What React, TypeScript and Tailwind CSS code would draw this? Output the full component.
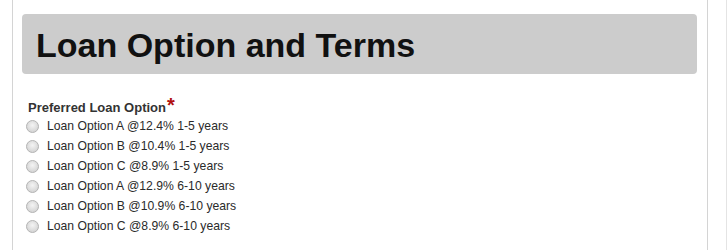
import React from "react";

const options = [
  "Loan Option A @12.4% 1-5 years",
  "Loan Option B @10.4% 1-5 years",
  "Loan Option C @8.9% 1-5 years",
  "Loan Option A @12.9% 6-10 years",
  "Loan Option B @10.9% 6-10 years",
  "Loan Option C @8.9% 6-10 years",
];

function Radio() {
  return (
    <svg width="13" height="13" viewBox="0 0 13 13" className="shrink-0">
      <defs>
        <radialGradient id="rg" cx="50%" cy="40%" r="60%">
          <stop offset="0%" stopColor="#f4f4f4" />
          <stop offset="100%" stopColor="#d2d2d2" />
        </radialGradient>
      </defs>
      <circle cx="6.5" cy="6.5" r="6" fill="url(#rg)" stroke="#b4b4b4" strokeWidth="1" />
    </svg>
  );
}

export default function App() {
  return (
    <div className="w-[728px] h-[250px] bg-white flex overflow-hidden" style={{ fontFamily: '"Liberation Sans", Arial, sans-serif' }}>
      <div className="w-[12px] shrink-0" />
      <div className="w-[696px] shrink-0 border-l border-r border-[#d4d4d4] h-full">
        <div className="mt-[14px] ml-[9px] mr-[10px] h-[60px] bg-[#cccccc] rounded-[4px] flex items-center pl-[14px]">
          <h1 className="text-[34px] font-bold text-[#111111] leading-none pt-[2px]">Loan Option and Terms</h1>
        </div>
        <div className="pl-[15px] pt-[21px]">
          <div className="flex items-start h-[21px]">
            <span className="text-[13px] font-bold text-[#333333] leading-none mt-[6px]">Preferred Loan Option</span>
            <span className="text-[20px] font-bold text-[#b01010] leading-none mt-[0px] ml-[1px]">*</span>
          </div>
          <div className="flex flex-col">
            {options.map((o) => (
              <label key={o} className="flex items-center h-[20px]">
                <span className="ml-[-2px] flex">
                  <Radio />
                </span>
                <span className="ml-[8px] text-[12.2px] text-[#2a2a2a] leading-none">{o}</span>
              </label>
            ))}
          </div>
        </div>
      </div>
      <div className="w-[18px] shrink-0" />
      <div className="w-[1px] shrink-0 bg-[#e4e4e4]" />
    </div>
  );
}
